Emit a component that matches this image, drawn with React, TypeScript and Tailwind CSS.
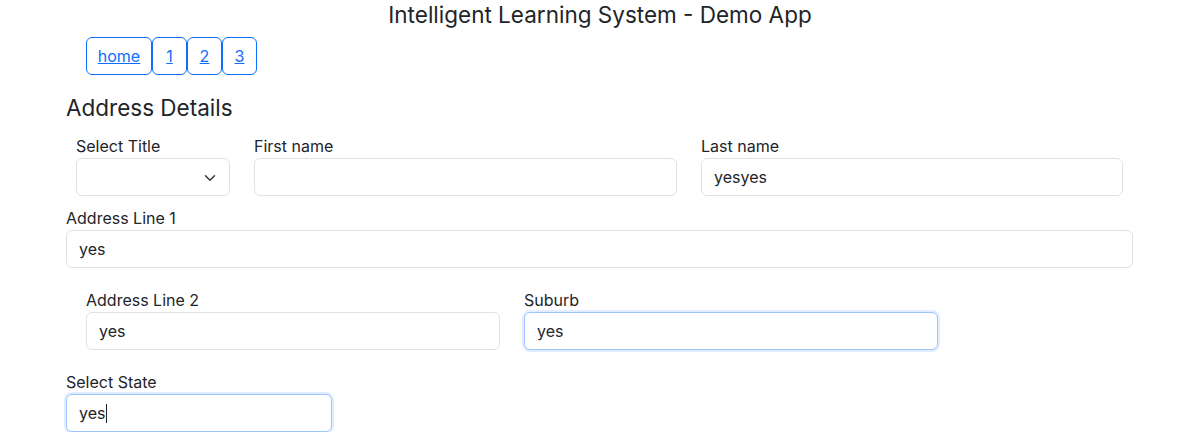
import React from "react";

const inputBase =
  "block w-full h-[38px] rounded-[6px] border border-[#dee2e6] bg-white px-3 text-[16px] text-[#212529] outline-none";
const focused =
  "block w-full h-[38px] rounded-[6px] border border-[#9ec5fe] bg-white px-3 text-[16px] text-[#212529] outline-none shadow-[0_0_0_2px_rgba(13,110,253,0.12)]";

function Field({
  label,
  value,
  cls,
  focus,
  width,
}: {
  label: string;
  value: string;
  cls?: string;
  focus?: boolean;
  width: string;
}) {
  return (
    <div className={`flex flex-col ${width} ${cls ?? ""}`}>
      <label className="h-6 leading-6 text-[16px] text-[#212529]">{label}</label>
      <div className={focus ? focused : inputBase}>
        <span className="leading-[36px]">{value}</span>
      </div>
    </div>
  );
}

export default function App() {
  return (
    <div
      className="w-[1200px] h-[432px] overflow-hidden bg-white text-[#212529]"
      style={{ fontFamily: "Inter, 'Noto Sans', sans-serif" }}
    >
      <h1 className="text-center text-[22.5px] leading-[26px] pt-[2px] h-[27px] font-normal">
        Intelligent Learning System - Demo App
      </h1>
      <nav className="flex mt-[10px] ml-[86px] h-[38px]">
        {["home", "1", "2", "3"].map((t) => (
          <a
            key={t}
            href="#"
            className={`flex items-center justify-center h-[38px] rounded-[6px] border border-[#0d6efd] text-[#0d6efd] underline text-[16px] ${
              t === "home" ? "w-[66px]" : "w-[35px]"
            }`}
          >
            {t}
          </a>
        ))}
      </nav>
      <div className="px-[66px]">
        <h4 className="mt-[18px] text-[22.5px] leading-[29px] font-normal h-[29px]">Address Details</h4>
        <div className="flex mt-[12px] ml-[10px] gap-[24px]">
          <div className="flex flex-col w-[154px]">
            <label className="h-6 leading-6 text-[16px]">Select Title</label>
            <div className={`${inputBase} relative`}>
              <svg
                className="absolute right-[13px] top-[13px]"
                width="12"
                height="12"
                viewBox="0 0 16 16"
              >
                <path
                  d="M2 5l6 6 6-6"
                  fill="none"
                  stroke="#343a40"
                  strokeWidth="2"
                  strokeLinecap="round"
                  strokeLinejoin="round"
                />
              </svg>
            </div>
          </div>
          <Field label="First name" value="" width="w-[423px]" />
          <Field label="Last name" value="yesyes" width="w-[422px]" />
        </div>
        <Field label="Address Line 1" value="yes" width="w-[1067px]" cls="mt-[10px]" />
        <div className="flex mt-[20px] ml-[20px] gap-[24px]">
          <Field label="Address Line 2" value="yes" width="w-[414px]" />
          <Field label="Suburb" value="yes" width="w-[414px]" focus />
        </div>
        <div className="flex flex-col w-[266px] mt-[20px]">
          <label className="h-6 leading-6 text-[16px]">Select State</label>
          <div className={focused}>
            <span className="leading-[36px]">yes</span>
            <span className="inline-block w-px h-[19px] bg-[#212529] align-middle ml-[1px] -mt-[3px]" />
          </div>
        </div>
      </div>
    </div>
  );
}
